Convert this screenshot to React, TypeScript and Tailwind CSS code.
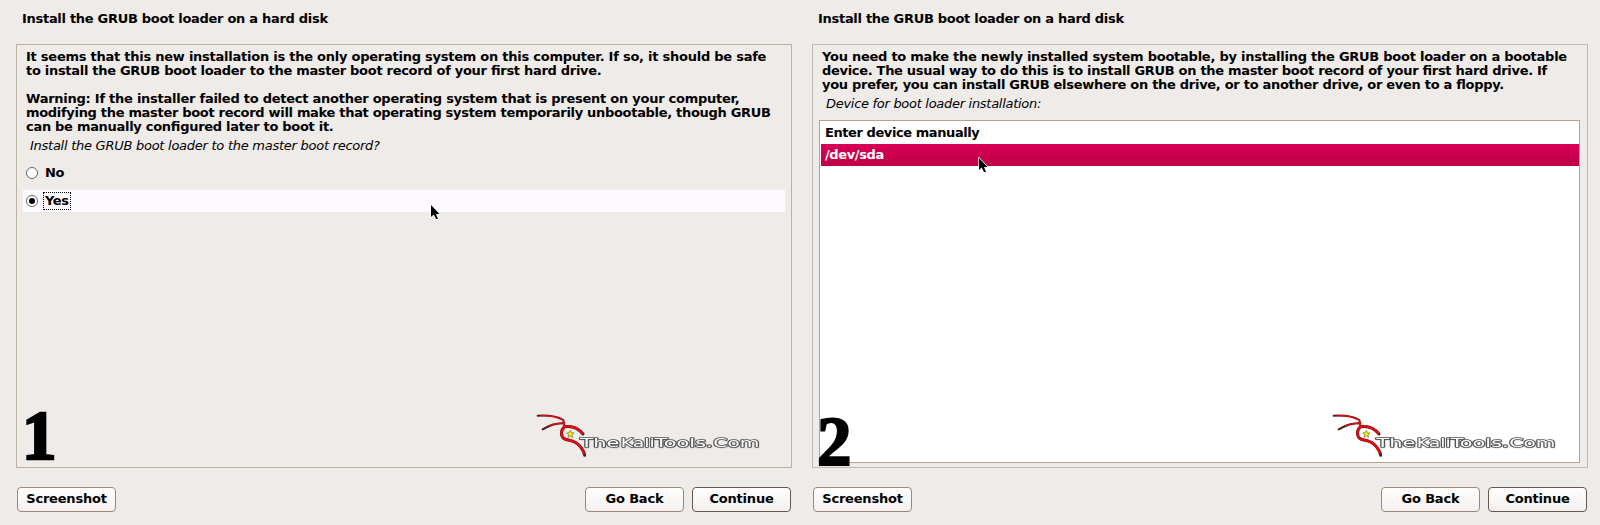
import type { ReactNode } from "react";

function Line({ children, spacing }: { children?: ReactNode; spacing?: string }) {
  return <div className={`h-[14px] whitespace-nowrap ${spacing ?? ""}`}>{children}</div>;
}

function Button({ children, dark }: { children: ReactNode; dark?: boolean }) {
  return (
    <button
      className={`flex h-[25px] w-[99px] items-center justify-center rounded-[4px] border bg-gradient-to-b from-white to-[#f4f0ef] pb-px text-[13px] font-bold tracking-[-0.2px] ${dark ? "border-[#67584f]" : "border-[#9a8a74]"}`}
    >
      {children}
    </button>
  );
}

function Cursor() {
  return (
    <svg width="12" height="18" viewBox="0 0 12 18" className="block">
      <path d="M1 1V13L3.7 10.5L6 15H8L6 10H9.5Z" fill="#000" stroke="#fff" strokeWidth="1.4" paintOrder="stroke" />
    </svg>
  );
}

function Logo() {
  return (
    <svg width="240" height="50" viewBox="30 30 720 150" className="block">
      <g
        fontFamily="'DejaVu Sans', sans-serif" fontSize="38" fill="#fff" stroke="#555" strokeWidth="5"
        strokeLinejoin="round" paintOrder="stroke" className="drop-shadow-[1px_1px_1px_#8888]"
      >
        <text x="181" y="142" textLength="117" lengthAdjust="spacingAndGlyphs">The</text>
        <text x="302" y="142" textLength="102" lengthAdjust="spacingAndGlyphs">Kali</text>
        <text x="404" y="142" textLength="174" lengthAdjust="spacingAndGlyphs">Tools.</text>
        <text x="580" y="142" textLength="138" lengthAdjust="spacingAndGlyphs">Com</text>
      </g>
      <g fill="none" strokeLinecap="round" strokeLinejoin="round">
        <g stroke="#541a1a">
          <path d="M53 47C85 45 115 51 130 60L133 76" strokeWidth="6" />
          <path d="M68 88C88 76 110 67 133 70" strokeWidth="6" />
          <path d="M189 102C175 84 155 77 134 80C121 91 122 107 132 116C146 124 163 117 181 140C189 150 193 158 194 166" strokeWidth="9" />
        </g>
        <g stroke="#e00c12">
          <path d="M64 47C94 46 115 52 130 60L133 76" strokeWidth="4" />
          <path d="M88 77C108 70 120 68 133 72" strokeWidth="4" />
          <path d="M187 100C174 84 155 77 134 80C121 91 122 107 132 116C146 124 163 117 181 140C187 148 190 153 191 159" strokeWidth="7" />
        </g>
      </g>
      <path d="M151 91L154 98L162 99L156 104L158 112L151 108L144 112L146 104L140 99L148 98Z" fill="#f7ee1b" stroke="#777019" strokeWidth="2" />
    </svg>
  );
}

function Radio({ checked }: { checked?: boolean }) {
  return (
    <span className="flex size-[12px] items-center justify-center rounded-full border border-[#6d6560] bg-white">
      {checked && <span className="size-[6px] rounded-full bg-black" />}
    </span>
  );
}

function Panel({ children, border }: { children: ReactNode; border: string }) {
  return (
    <section className="flex w-[796px] flex-col pl-4 pr-1">
      <h1 className="h-[44px] pl-[6px] pt-[11px] text-[13px] leading-[16px] font-bold tracking-[-0.29px]">Install the GRUB boot loader on a hard disk</h1>
      <div className={`relative h-[424px] border ${border}`}>{children}</div>
      <div className="mt-[19px] flex gap-2 px-px">
        <Button>Screenshot</Button>
        <span className="grow" />
        <Button>Go Back</Button>
        <Button dark>Continue</Button>
      </div>
    </section>
  );
}

export default function App() {
  return (
    <main className="flex h-[525px] w-[1600px] overflow-hidden bg-[#efebe8] font-['DejaVu_Sans',sans-serif] text-[13px] text-black [font-feature-settings:'liga'_1]">
      <Panel border="border-[#bcb0a3]">
        <div className="pl-[9px] pt-[5px] leading-[14px] font-bold">
          <Line spacing="tracking-[-0.245px]">It seems that this new installation is the only operating system on this computer. If so, it should be safe</Line>
          <Line spacing="tracking-[-0.295px]">to install the GRUB boot loader to the master boot record of your first hard drive.</Line>
          <Line />
          <Line spacing="tracking-[-0.25px]">Warning: If the installer failed to detect another operating system that is present on your computer,</Line>
          <Line spacing="tracking-[-0.31px]">modifying the master boot record will make that operating system temporarily unbootable, though GRUB</Line>
          <Line spacing="tracking-[-0.29px]">can be manually configured later to boot it.</Line>
        </div>
        <div className="mt-[4px] pl-[13px] leading-[16px] tracking-[-0.26px] italic">Install the GRUB boot loader to the master boot record?</div>
        <div className="mt-[8px] ml-[6px] flex h-[22px] w-[762px] items-center pl-[3px] font-bold">
          <Radio />
          <span className="ml-[7px] tracking-[-0.3px]">No</span>
        </div>
        <div className="mt-[6px] ml-[6px] flex h-[22px] w-[762px] items-center bg-[#fdfaff] pl-[3px] font-bold">
          <Radio checked />
          <span className="ml-[5px] h-[18px] w-[28px] border border-dotted border-black pl-px leading-[16px] tracking-[-0.4px]">Yes</span>
        </div>
        <div className="absolute left-[413px] top-[159px]"><Cursor /></div>
        <div className="absolute left-[5px] top-[355px] font-['Liberation_Serif',serif] text-[69px] leading-[72px] font-bold [-webkit-text-stroke:2.5px_black]">1</div>
        <div className="absolute left-[513px] top-[365px]"><Logo /></div>
      </Panel>
      <Panel border="border-[#bfb8b3]">
        <div className="pl-[9px] pt-[5px] leading-[14px] font-bold">
          <Line spacing="tracking-[-0.25px]">You need to make the newly installed system bootable, by installing the GRUB boot loader on a bootable</Line>
          <Line spacing="tracking-[-0.305px]">device. The usual way to do this is to install GRUB on the master boot record of your first hard drive. If</Line>
          <Line spacing="tracking-[-0.29px]">you prefer, you can install GRUB elsewhere on the drive, or to another drive, or even to a floppy.</Line>
        </div>
        <div className="mt-[4px] pl-[13px] leading-[16px] tracking-[-0.29px] italic">Device for boot loader installation:</div>
        <div className="mt-[8px] ml-[6px] h-[343px] w-[761px] border border-[#b0a48f] bg-white pl-px pt-px font-bold">
          <div className="h-[22px] pl-[4px] leading-[22px] tracking-[-0.42px]">Enter device manually</div>
          <div className="h-[22px] bg-gradient-to-b from-[#d90056] to-[#bd0046] pl-[4px] leading-[22px] tracking-[-0.38px] text-white">/dev/sda</div>
        </div>
        <div className="absolute left-[165px] top-[112px]"><Cursor /></div>
        <div className="absolute left-[4px] top-[361px] font-['Liberation_Serif',serif] text-[69px] leading-[72px] font-bold [-webkit-text-stroke:2px_black]">2</div>
        <div className="absolute left-[513px] top-[365px]"><Logo /></div>
      </Panel>
    </main>
  );
}
